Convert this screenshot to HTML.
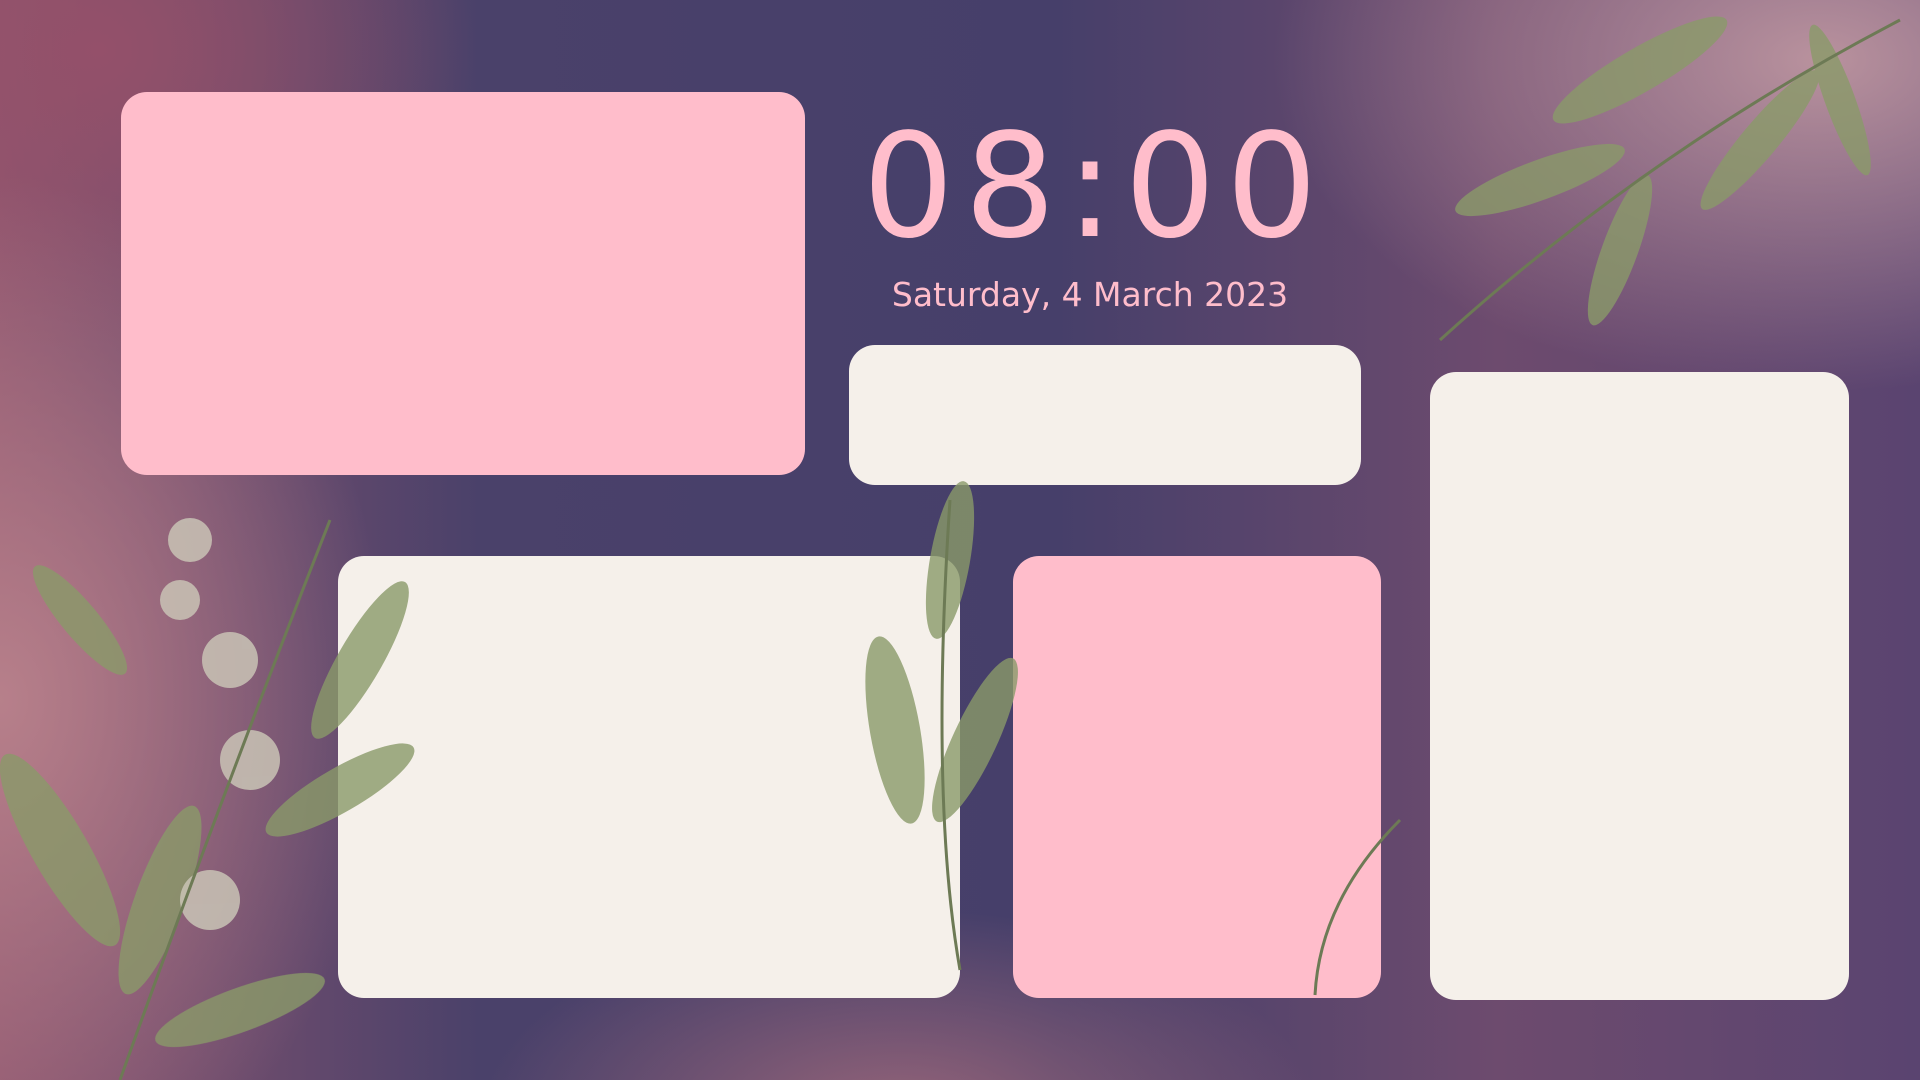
<!DOCTYPE html>
<html><head><meta charset="utf-8"><style>
html,body{margin:0;padding:0}
body{width:1920px;height:1080px;overflow:hidden;position:relative;font-family:"Liberation Sans",sans-serif;
background:
radial-gradient(ellipse 760px 460px at 1820px 60px,rgba(190,150,160,0.95),rgba(190,150,160,0) 72%),
radial-gradient(ellipse 520px 700px at 0px 700px,rgba(185,130,140,0.95),rgba(185,130,140,0) 75%),
radial-gradient(ellipse 600px 300px at 900px 1120px,rgba(170,110,125,0.8),rgba(170,110,125,0) 70%),
radial-gradient(ellipse 500px 400px at 100px 50px,rgba(150,80,105,0.9),rgba(150,80,105,0) 75%),
linear-gradient(90deg,#8e566f 0%,#4a416a 25%,#463f6a 55%,#6d4b6e 78%,#5a4470 100%);}
.b{position:absolute;border-radius:26px}
.p{background:#ffbdcb}.c{background:#f5f0ea}
.t{position:absolute;color:#ffbdcb;text-align:center}
svg{position:absolute;left:0;top:0}
</style></head><body>
<div class="b p" style="left:121px;top:92px;width:684px;height:383px"></div>
<div class="b c" style="left:849px;top:345px;width:512px;height:140px"></div>
<div class="b c" style="left:1430px;top:372px;width:419px;height:628px"></div>
<div class="b c" style="left:338px;top:556px;width:622px;height:442px"></div>
<div class="b p" style="left:1013px;top:556px;width:368px;height:442px"></div>
<div class="t" style="left:790px;top:106px;width:600px;font-family:'DejaVu Sans',sans-serif;font-size:144px;letter-spacing:10px;text-indent:10px;line-height:160px">08:00</div>
<div class="t" style="left:790px;top:274px;width:600px;font-family:'DejaVu Sans',sans-serif;font-size:33px;line-height:42px">Saturday, 4 March 2023</div>
<svg width="1920" height="1080">
<g fill="#8a9a6a" opacity="0.8">
<ellipse cx="950" cy="560" rx="20" ry="80" transform="rotate(10 950 560)"/>
<ellipse cx="895" cy="730" rx="25" ry="95" transform="rotate(-10 895 730)"/>
<ellipse cx="975" cy="740" rx="22" ry="90" transform="rotate(25 975 740)"/>
<ellipse cx="1640" cy="70" rx="22" ry="100" transform="rotate(60 1640 70)"/>
<ellipse cx="1540" cy="180" rx="20" ry="90" transform="rotate(70 1540 180)"/>
<ellipse cx="1620" cy="250" rx="18" ry="80" transform="rotate(20 1620 250)"/>
<ellipse cx="1760" cy="140" rx="18" ry="90" transform="rotate(40 1760 140)"/>
<ellipse cx="1840" cy="100" rx="15" ry="80" transform="rotate(-20 1840 100)"/>
<ellipse cx="60" cy="850" rx="28" ry="110" transform="rotate(-30 60 850)"/>
<ellipse cx="160" cy="900" rx="25" ry="100" transform="rotate(20 160 900)"/>
<ellipse cx="360" cy="660" rx="22" ry="90" transform="rotate(30 360 660)"/>
<ellipse cx="340" cy="790" rx="22" ry="85" transform="rotate(60 340 790)"/>
<ellipse cx="80" cy="620" rx="18" ry="70" transform="rotate(-40 80 620)"/>
<ellipse cx="240" cy="1010" rx="22" ry="90" transform="rotate(70 240 1010)"/>
</g>
<g fill="#c9c4b6" opacity="0.85">
<circle cx="230" cy="660" r="28"/><circle cx="190" cy="540" r="22"/><circle cx="250" cy="760" r="30"/>
<circle cx="210" cy="900" r="30"/><circle cx="180" cy="600" r="20"/>
</g>
<g stroke="#6d7a55" stroke-width="3" fill="none">
<path d="M960 970 Q930 800 950 500"/><path d="M1315 995 Q1320 900 1400 820"/>
<path d="M1440 340 Q1650 150 1900 20"/><path d="M120 1080 Q220 800 330 520"/>
</g>
</svg>
</body></html>
